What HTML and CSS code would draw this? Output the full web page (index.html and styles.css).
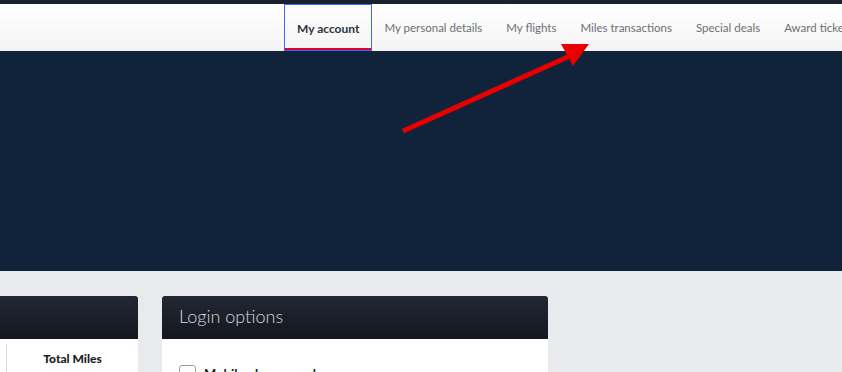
FILE: index.html
```html
<!DOCTYPE html>
<html>

<head>
    <title>My account</title>
    <link rel="stylesheet" href="styles.css">
</head>

<body>
    <div class="topbar"></div>
    <div class="navbar">
        <ul class="tab-menu">
            <li class="tab-menu-item active"><a href="#">My account</a></li>
            <li class="tab-menu-item"><a href="#">My personal details</a></li>
            <li class="tab-menu-item"><a href="#">My flights</a></li>
            <li class="tab-menu-item"><a href="#">Miles transactions</a></li>
            <li class="tab-menu-item"><a href="#">Special deals</a></li>
            <li class="tab-menu-item"><a href="#">Award tickets</a></li>
        </ul>
    </div>

    <div class="hero"></div>

    <div class="content">
        <div class="panel panel-miles">
            <div class="panel-header"></div>
            <div class="panel-body">
                <div class="miles-col">Total Miles</div>
            </div>
        </div>
        <div class="panel panel-login">
            <div class="panel-header">Login options</div>
            <div class="panel-body">
                <label class="option">
                    <span class="checkbox"></span>
                    <span class="option-label">Mobile phone number</span>
                </label>
            </div>
        </div>
    </div>

    <!-- annotation arrow -->
    <svg class="arrow" width="842" height="372" viewBox="0 0 842 372">
        <line x1="403" y1="131" x2="570" y2="56" stroke="#e80000" stroke-width="5" />
        <polygon points="561,44 589,44 573,66" fill="#e80000" />
    </svg>
</body>

</html>
```

FILE: styles.css
```css
body {
    margin: 0;
    font-family: Lato, "Open Sans", sans-serif;
    background-color: #e9eaee;
    height: 372px;
    overflow: hidden;
}

.topbar {
    height: 4px;
    background-color: #1c2130;
}

/* 导航栏 */
.navbar {
    height: 47px;
    background: linear-gradient(#ffffff, #f4f4f4);
    overflow: hidden;
}

.navbar ul {
    list-style: none;
    margin: 0;
    padding: 0 0 0 284px;
    display: flex;
    white-space: nowrap;
}

.navbar li a {
    display: block;
    height: 47px;
    line-height: 48px;
    padding: 0 12px;
    font-size: 11.5px;
    text-decoration: none;
    color: #6d6f74;
    box-sizing: border-box;
}

.navbar li.active a {
    font-size: 12px;
    color: #2e323b;
    font-weight: bold;
    border: 1px solid #3b6df4;
    box-shadow: inset 0 -2px 0 #e0003c;
}

.hero {
    height: 220px;
    background-color: #10233a;
}

/* 面板 */
.content {
    display: flex;
    gap: 24px;
    padding-top: 25px;
}

.panel {
    background-color: #ffffff;
    border-radius: 3px 3px 0 0;
}

.panel-header {
    height: 43px;
    background: linear-gradient(#222733, #14171f);
    border-radius: 3px 3px 0 0;
    color: #d8d9dc;
    font-size: 18px;
    font-weight: 300;
    line-height: 41px;
    padding: 0 17px;
}

.panel-miles {
    width: 138px;
    border-radius: 0 3px 0 0;
}

.panel-miles .panel-header {
    border-radius: 0 3px 0 0;
}

.panel-miles .panel-body {
    padding: 5px 0 0 6px;
}

.miles-col {
    border-left: 1px solid #dddddd;
    height: 40px;
    text-align: center;
    font-size: 12px;
    font-weight: 900;
    color: #1b1e26;
    padding-top: 7px;
    box-sizing: border-box;
}

.panel-login {
    width: 386px;
}

.panel-login .panel-body {
    padding: 26px 17px 0;
}

.option {
    display: flex;
    align-items: flex-start;
    gap: 8px;
}

.checkbox {
    width: 17px;
    height: 17px;
    border: 1px solid #9a9ca2;
    border-radius: 3px;
    box-sizing: border-box;
}

.option-label {
    font-size: 13px;
    font-weight: bold;
    color: #1b1e26;
    line-height: 17px;
    padding-top: 1px;
}

.arrow {
    position: absolute;
    top: 0;
    left: 0;
}
```
